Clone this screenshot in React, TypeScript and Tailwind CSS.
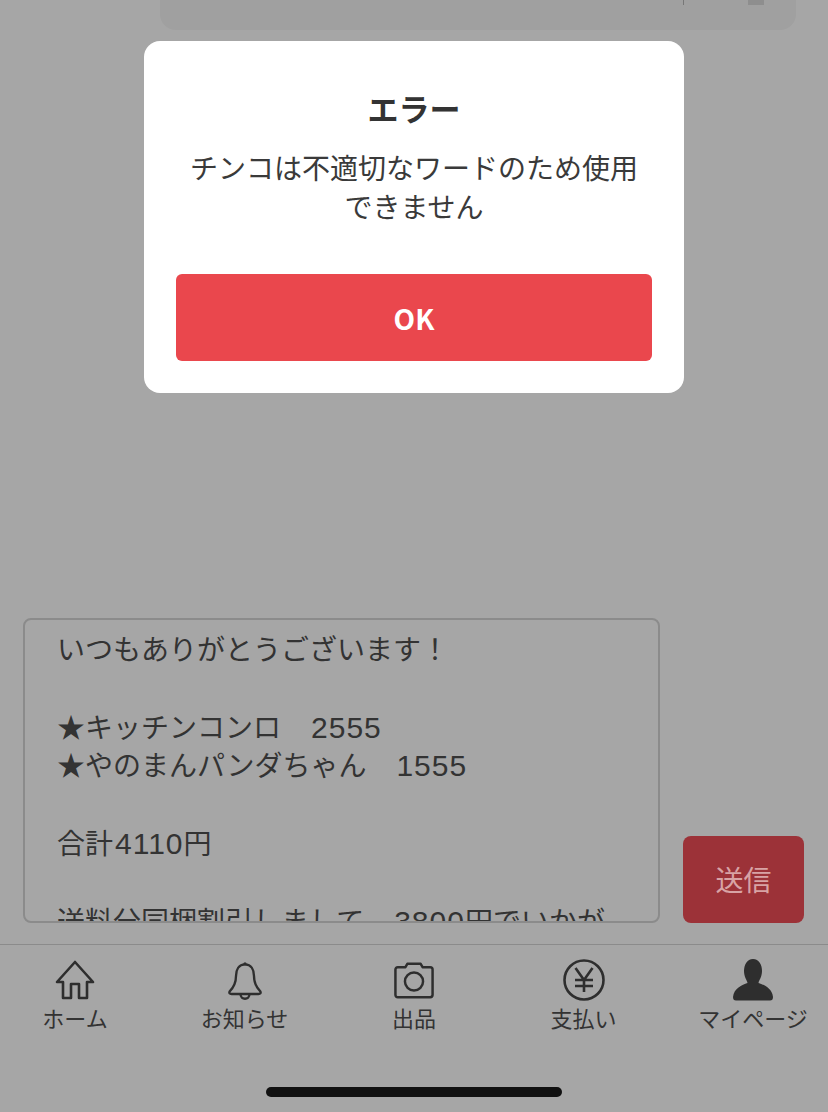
const Home = () => (
  <svg width="40" height="40" viewBox="0 0 40 40" fill="none" stroke="#2e2e2e" strokeWidth="2.6" strokeLinejoin="round">
    <path d="M20 2 L38 22 L32 22 L32 38 L24 38 L24 24 L16 24 L16 38 L8 38 L8 22 L2 22 Z" />
  </svg>
);

const Bell = () => (
  <svg width="36" height="41" viewBox="0 0 40 42" fill="none" stroke="#2e2e2e" strokeWidth="2.6" strokeLinejoin="round">
    <path d="M20 3 C27 3 30 9 30 16 C30 24 32 28 37 33 C38 35 37 36 35 36 L5 36 C3 36 2 35 3 33 C8 28 10 24 10 16 C10 9 13 3 20 3 Z" />
    <path d="M15 36 C15 43 25 43 25 36" />
    <circle cx="20" cy="2.5" r="1.8" fill="#2e2e2e" stroke="none" />
  </svg>
);

const Camera = () => (
  <svg width="40" height="37" viewBox="0 0 42 38" fill="none" stroke="#2e2e2e" strokeWidth="2.6" strokeLinejoin="round">
    <path d="M4 5 L12 5 L14 1.5 L28 1.5 L30 5 L38 5 C39.5 5 40.5 6 40.5 7.5 L40.5 34 C40.5 35.5 39.5 36.5 38 36.5 L4 36.5 C2.5 36.5 1.5 35.5 1.5 34 L1.5 7.5 C1.5 6 2.5 5 4 5 Z" />
    <circle cx="21" cy="20" r="9.5" />
  </svg>
);

const Yen = () => (
  <svg width="42" height="42" viewBox="0 0 42 42" fill="none" stroke="#2e2e2e" strokeWidth="2.6">
    <circle cx="21" cy="21" r="19.5" />
    <path d="M12.5 9 L21 21 L29.5 9 M21 21 L21 33 M12 21 L30 21 M12 27 L30 27" />
  </svg>
);

const Person = () => (
  <svg width="42" height="42" viewBox="0 0 42 42" fill="#2e2e2e">
    <path d="M21 0 C27 0 30 6 30 12 C30 18 27 21 26.5 24 C32 26 40 29 41 38 C41 40.5 40 41.5 38 41.5 L4 41.5 C2 41.5 1 40.5 1 38 C2 29 10 26 15.5 24 C15 21 12 18 12 12 C12 6 15 0 21 0 Z" />
  </svg>
);

const Digits = ({ children }: { children: string }) => (
  <span className="ml-[2px] font-['Liberation_Sans',sans-serif] text-[30px] leading-none tracking-[1px]">{children}</span>
);

const tabs = [
  { label: "ホーム", icon: <Home /> },
  { label: "お知らせ", icon: <Bell /> },
  { label: "出品", icon: <Camera /> },
  { label: "支払い", icon: <Yen /> },
  { label: "マイページ", icon: <Person /> },
];

const App = () => {
  return (
    <div className="relative flex h-[1112px] w-full flex-col overflow-hidden bg-[#a6a6a6] font-['Noto_Sans_CJK_JP',sans-serif] text-[#333333]">
      <div className="ml-[160px] mr-[32px] flex h-[30px] shrink-0 items-start justify-end gap-[64px] rounded-b-[16px] bg-[#a0a0a0] pr-[32px]">
        <div className="h-[5px] w-px bg-[#777777]"></div>
        <div className="h-[5px] w-[16px] bg-[#8e8e8e]"></div>
      </div>

      <div className="mt-[588px] flex h-[305px] shrink-0 items-end justify-between pl-[23px] pr-[24px]">
        <div className="h-[305px] w-[637px] overflow-hidden rounded-[8px] border-2 border-[#8b8b8b] pl-[32px] pr-[20px] pt-[9px] text-[28px] leading-[38.8px]">
          <p>いつもありがとうございます{"\uFF01"}</p>
          <p>&nbsp;</p>
          <p>★キッチンコンロ{"\u3000"}<Digits>2555</Digits></p>
          <p>★やのまんパンダちゃん{"\u3000"}<Digits>1555</Digits></p>
          <p>&nbsp;</p>
          <p>合計<Digits>4110</Digits>円</p>
          <p>&nbsp;</p>
          <p className="whitespace-nowrap">送料分同梱割引しまして{"\u3000"}<Digits>3800</Digits>円でいかが</p>
        </div>
        <button className="flex h-[87px] w-[121px] items-center justify-center rounded-[8px] bg-[#9c3238] pb-[2px] text-[28px] text-[#d8a3a5]">
          送信
        </button>
      </div>

      <nav className="mt-[21px] flex shrink-0 justify-between border-t border-[#8b8b8b] px-[5px] pt-[13px]">
        {tabs.map((tab) => (
          <div key={tab.label} className="flex w-[140px] flex-col items-center">
            <div className="flex h-[44px] items-center justify-center">{tab.icon}</div>
            <span className="-mt-[3px] whitespace-nowrap text-[22px] leading-[36px]">{tab.label}</span>
          </div>
        ))}
      </nav>

      <div className="mt-auto mb-[15px] flex justify-center">
        <div className="h-[10px] w-[296px] rounded-full bg-[#111111]"></div>
      </div>

      <div className="absolute inset-x-0 top-[41px] flex justify-center">
        <div className="flex h-[352px] w-[540px] flex-col items-center rounded-[16px] bg-white px-[32px] text-[#3a3a3a]">
          <h1 className="mt-[45px] text-[31px] font-bold leading-[44px] text-[#333333]">エラー</h1>
          <p className="mt-[18px] text-center text-[28px] leading-[39px]">
            チンコは不適切なワードのため使用
            <br />
            できません
          </p>
          <button className="mt-[48px] flex h-[87px] w-full items-center justify-center rounded-[6px] bg-[#ea474d] text-[28px] font-bold text-white">
            OK
          </button>
        </div>
      </div>
    </div>
  );
};

export default App;
